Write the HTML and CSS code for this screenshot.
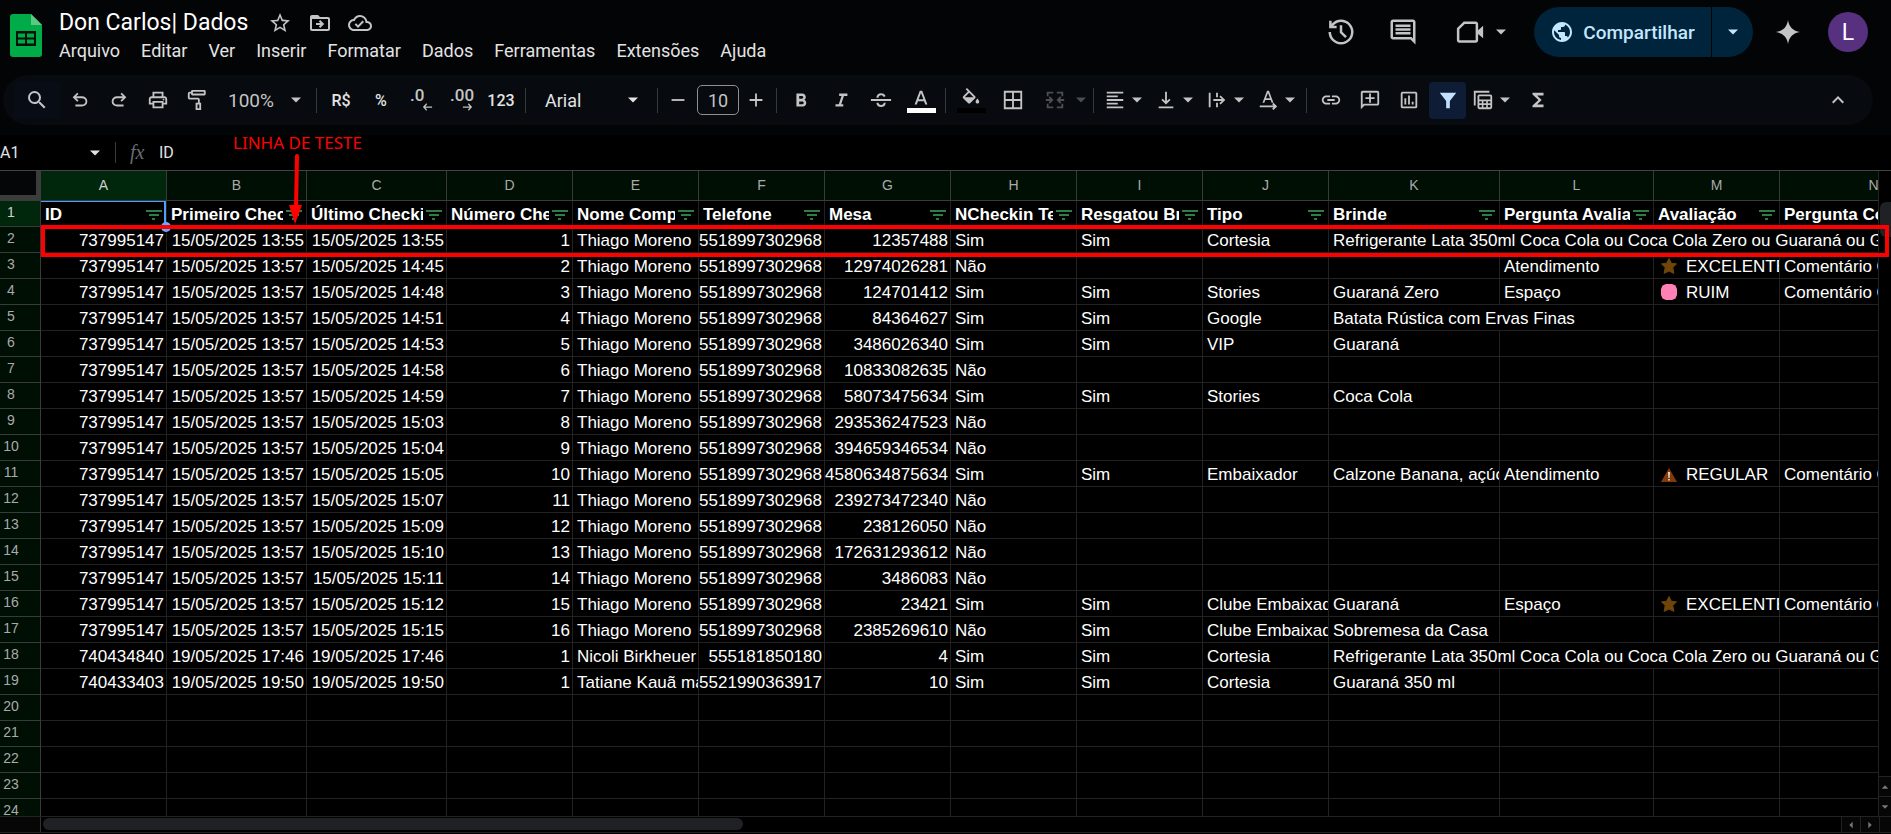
FILE: index.html
```html
<!DOCTYPE html>
<html lang="pt-BR">
<head>
<meta charset="utf-8">
<title>Don Carlos| Dados</title>
<link rel="stylesheet" href="styles.css">
</head>
<body>
<svg class="defs" aria-hidden="true">
  <symbol id="star" viewBox="0 0 24 24"><path d="M22 9.24l-7.19-.62L12 2 9.19 8.63 2 9.24l5.46 4.73L5.82 21 12 17.27 18.18 21l-1.63-7.03L22 9.24zM12 15.4l-3.76 2.27 1-4.28-3.32-2.88 4.38-.38L12 6.1l1.71 4.04 4.38.38-3.32 2.88 1 4.28L12 15.4z"/></symbol>
  <symbol id="move" viewBox="0 0 24 24"><path d="M20 6h-8l-2-2H4c-1.1 0-2 .9-2 2v12c0 1.1.9 2 2 2h16c1.1 0 2-.9 2-2V8c0-1.1-.9-2-2-2zm0 12H4V8h16v10zM12.2 17l4-4-4-4-1.4 1.4 1.6 1.6H8v2h4.4l-1.6 1.6z"/></symbol>
  <symbol id="cloud" viewBox="0 0 24 24"><path d="M19.35 10.04A7.49 7.49 0 0 0 12 4C9.11 4 6.6 5.64 5.35 8.04A5.994 5.994 0 0 0 0 14c0 3.31 2.69 6 6 6h13c2.76 0 5-2.24 5-5 0-2.64-2.05-4.78-4.65-4.96zM19 18H6c-2.21 0-4-1.79-4-4s1.79-4 4-4h.71C7.37 7.69 9.48 6 12 6c3.04 0 5.5 2.46 5.5 5.5v.5H19c1.66 0 3 1.34 3 3s-1.34 3-3 3zm-9-3.8l-2-2-1.4 1.4 3.4 3.4 6-6-1.4-1.4z"/></symbol>
  <symbol id="history" viewBox="0 0 24 24"><path d="M12 2a10 10 0 0 0-7.500 3.400V3H2.500v6h6V7H5.800A8 8 0 1 1 4 12H2A10 10 0 1 0 12 2zm-1 4.500v6l4.300 4.300 1.400-1.400-3.700-3.700V6.500z"/></symbol>
  <symbol id="chat" viewBox="0 0 24 24"><path d="M22 4c0-1.1-.9-2-2-2H4c-1.1 0-2 .9-2 2v12c0 1.1.9 2 2 2h14l4 4V4zm-2 13.2L18.8 16H4V4h16v13.2zM6 12h12v2H6zm0-3h12v2H6zm0-3h12v2H6z"/></symbol>
  <symbol id="video" viewBox="0 0 24 24"><path d="M7 3.500h9.500c1.100 0 2 .9 2 2v5l4-3.500v10l-4-3.500v5c0 1.100-.9 2-2 2H3.500c-1.100 0-2-.9-2-2V9zm.8 2L3.500 9.800v8.700h13v-13z"/></symbol>
  <symbol id="globe" viewBox="0 0 24 24"><path d="M12 2C6.480 2 2 6.480 2 12s4.480 10 10 10 10-4.480 10-10S17.520 2 12 2zm-1 17.930c-3.950-.490-7-3.850-7-7.930 0-.620.080-1.210.210-1.790L9 15v1c0 1.100.900 2 2 2v1.930zm6.900-2.540c-.260-.810-1-1.390-1.900-1.390h-1v-3c0-.550-.450-1-1-1H8v-2h2c.550 0 1-.450 1-1V7h2c1.100 0 2-.900 2-2v-.410c2.930 1.190 5 4.060 5 7.410 0 2.080-.800 3.970-2.100 5.390z"/></symbol>
  <symbol id="spark" viewBox="0 0 24 24"><path d="M12 0c1 7 5 11 12 12-7 1-11 5-12 12-1-7-5-11-12-12 7-1 11-5 12-12z"/></symbol>
  <symbol id="down" viewBox="0 0 24 24"><path d="M2 7h20L12 17z"/></symbol>
  <symbol id="search" viewBox="0 0 24 24"><path d="M15.500 14h-.790l-.280-.270A6.471 6.471 0 0 0 16 9.500 6.500 6.500 0 1 0 9.500 16c1.610 0 3.090-.590 4.230-1.570l.270.280v.790l5 4.990L20.490 19l-4.990-5zm-6 0C7.010 14 5 11.990 5 9.500S7.010 5 9.500 5 14 7.010 14 9.500 11.990 14 9.500 14z"/></symbol>
  <symbol id="undo" viewBox="0 0 24 24"><path d="M7 19v-2h7.100q1.575 0 2.738-1T18 13.500 16.838 11 14.100 10H7.800l2.600 2.600L9 14 4 9l5-5 1.400 1.400L7.800 8h6.300q2.425 0 4.163 1.575T20 13.500t-1.737 3.925T14.100 19z"/></symbol>
  <symbol id="redo" viewBox="0 0 24 24"><path d="M9.900 19q-2.425 0-4.163-1.575T4 13.500t1.737-3.925T9.900 8h6.300l-2.600-2.600L15 4l5 5-5 5-1.400-1.400 2.600-2.600H9.900q-1.575 0-2.737 1T6 13.500 7.163 16 9.900 17H17v2z"/></symbol>
  <symbol id="print" viewBox="0 0 24 24"><path d="M19 8h-1V3H6v5H5c-1.660 0-3 1.340-3 3v6h4v4h12v-4h4v-6c0-1.660-1.340-3-3-3zM8 5h8v3H8V5zm8 14H8v-4h8v4zm2-4v-2H6v2H4v-4c0-.550.450-1 1-1h14c.550 0 1 .450 1 1v4h-2z"/><circle cx="18" cy="11.500" r="1"/></symbol>
  <symbol id="paint" viewBox="0 0 24 24"><path d="M7 1h13a1.500 1.500 0 0 1 1.500 1.500v3A1.500 1.500 0 0 1 20 7H7a1.500 1.500 0 0 1-1.500-1.500V5H4v4.500h9a2 2 0 0 1 2 2V15h1.500v8h-6v-8H13v-3.500H4a2 2 0 0 1-2-2V5a2 2 0 0 1 2-2h1.500v-.5A1.500 1.500 0 0 1 7 1zm.5 2v2h12V3zM12.500 17v4h2v-4z"/></symbol>
  <symbol id="arrl" viewBox="0 0 24 24"><path d="M9 3l2 2.200L6.800 10.500H23v3H6.800l4.200 5.300L9 21l-8-9z"/></symbol>
  <symbol id="arrr" viewBox="0 0 24 24"><path d="M15 3l-2 2.200 4.200 5.300H1v3h16.200L13 18.800l2 2.200 8-9z"/></symbol>
  <symbol id="minus" viewBox="0 0 24 24"><path d="M5 11h14v2H5z"/></symbol>
  <symbol id="plus" viewBox="0 0 24 24"><path d="M19 13h-6v6h-2v-6H5v-2h6V5h2v6h6z"/></symbol>
  <symbol id="bold" viewBox="0 0 24 24"><path d="M15.600 11.790c.970-.670 1.650-1.770 1.650-2.790 0-2.260-1.750-4-4-4H7v14h7.040c2.090 0 3.710-1.700 3.710-3.790 0-1.520-.860-2.820-2.150-3.420zM10 7.500h3c.830 0 1.500.670 1.500 1.500s-.670 1.500-1.500 1.500h-3v-3zm3.500 9H10v-3h3.500c.830 0 1.500.670 1.500 1.500s-.670 1.500-1.500 1.500z"/></symbol>
  <symbol id="italic" viewBox="0 0 24 24"><path d="M10 5v2.500h2.600l-3 9H6V19h8.500v-2.500H12.200l3-9H19V5z"/></symbol>
  <symbol id="strike" viewBox="0 0 24 24"><path d="M1 11h22v2H1zM7 9.500C7 6.500 9 4.500 12 4.500c2.600 0 4.400 1.300 5 3.500l-2.200.8c-.4-1.300-1.300-2-2.800-2-1.700 0-2.700 1-2.700 2.700zM7 15h2.300c.1 1.500 1.100 2.400 2.800 2.400s2.700-.9 2.800-2.400h2.300c-.1 2.900-2.100 4.700-5.100 4.700S7.100 17.900 7 15z"/></symbol>
  <symbol id="colorA" viewBox="0 0 24 24"><path d="M10.700 3L5 18h2.400l1.300-3.600h6.600l1.300 3.600H19L13.300 3zm-1.300 9.400L12 5.400l2.600 7z"/></symbol>
  <symbol id="fill" viewBox="0 0 24 24"><path d="M16.560 8.940L7.620 0 6.210 1.410l2.380 2.380-5.150 5.150a1.490 1.490 0 0 0 0 2.120l5.500 5.500c.290.290.680.440 1.060.440s.770-.150 1.060-.440l5.500-5.500c.590-.580.590-1.530 0-2.120zM5.210 10L10 5.210 14.790 10H5.210zM19 11.500s-2 2.170-2 3.500c0 1.100.900 2 2 2s2-.900 2-2c0-1.330-2-3.500-2-3.500z"/></symbol>
  <symbol id="borders" viewBox="0 0 24 24"><path d="M2 2v20h20V2H2zm9 18H4v-7h7v7zm0-9H4V4h7v7zm9 9h-7v-7h7v7zm0-9h-7V4h7v7z"/></symbol>
  <symbol id="merge" viewBox="0 0 24 24"><path d="M3 3h7v2H5v3H3zM14 3h7v5h-2V5h-5zM3 16h2v3h5v2H3zM19 16h2v5h-7v-2h5zM2 11h4.500L5 9.500 6.400 8l4 4-4 4L5 14.500 6.500 13H2zM22 11h-4.500L19 9.500 17.600 8l-4 4 4 4 1.400-1.500-1.500-1.500H22z"/></symbol>
  <symbol id="align" viewBox="0 0 24 24"><path d="M15 15H3v2h12v-2zm0-8H3v2h12V7zM3 13h18v-2H3v2zm0 8h18v-2H3v2zM3 3v2h18V3H3z"/></symbol>
  <symbol id="bottom" viewBox="0 0 24 24"><path d="M11 3h2v10.200l2.600-2.600L17 12l-5 5-5-5 1.400-1.400 2.600 2.600zM4 19v2h16v-2z"/></symbol>
  <symbol id="wrap" viewBox="0 0 24 24"><path d="M3 4h2v16H3zM11 4h2v5h-2zM11 15h2v5h-2zM8 11h9.200l-2.600-2.600L16 7l5 5-5 5-1.400-1.400 2.600-2.600H8z"/></symbol>
  <symbol id="rotate" viewBox="0 0 24 24"><path d="M11 2L6 15h2l1.100-3h5.800l1.100 3h2L13 2zm-1.200 8.200L12 4.300l2.200 5.900zM3 18h15l-1.500-1.500 1.500-1.500 4 4-4 4-1.500-1.500L18 20H3z"/></symbol>
  <symbol id="link" viewBox="0 0 24 24"><path d="M3.900 12c0-1.710 1.390-3.100 3.100-3.100h4V7H7c-2.760 0-5 2.240-5 5s2.240 5 5 5h4v-1.900H7c-1.710 0-3.100-1.390-3.100-3.100zM8 13h8v-2H8v2zm9-6h-4v1.900h4c1.710 0 3.100 1.390 3.100 3.100s-1.390 3.100-3.100 3.100h-4V17h4c2.760 0 5-2.240 5-5s-2.240-5-5-5z"/></symbol>
  <symbol id="comment" viewBox="0 0 24 24"><path d="M20 2H4c-1.100 0-2 .900-2 2v18l4-4h14c1.100 0 2-.900 2-2V4c0-1.100-.900-2-2-2zm0 14H5.200L4 17.200V4h16v12zM11 5h2v4h4v2h-4v4h-2v-4H7V9h4z"/></symbol>
  <symbol id="chart" viewBox="0 0 24 24"><path d="M5 3h14a2 2 0 0 1 2 2v14a2 2 0 0 1-2 2H5a2 2 0 0 1-2-2V5a2 2 0 0 1 2-2zm0 2v14h14V5zM7 10h2v7H7zM11 7h2v10h-2zM15 14h2v3h-2z"/></symbol>
  <symbol id="funnel" viewBox="0 0 24 24"><path d="M3 4h18l-7 9v8h-4v-8z"/></symbol>
  <symbol id="views" viewBox="0 0 24 24"><path d="M2 2h17v2H4v14H2zM8 6h12a2 2 0 0 1 2 2v12a2 2 0 0 1-2 2H8a2 2 0 0 1-2-2V8a2 2 0 0 1 2-2zm0 2v3.500h12V8zm0 5.300v2.200h2.700v-2.200zm4.500 0v2.200h3v-2.200zm4.800 0v2.200H20v-2.200zM8 17.500V20h2.700v-2.500zm4.500 0V20h3v-2.500zm4.800 0V20H20v-2.500z"/></symbol>
  <symbol id="sigma" viewBox="0 0 24 24"><path d="M18 4H6v2l6.500 6L6 18v2h12v-3h-7l5-5-5-5h7z"/></symbol>
  <symbol id="up" viewBox="0 0 24 24"><path d="M12 8l-6 6 1.410 1.410L12 10.830l4.590 4.580L18 14z"/></symbol>
  <symbol id="filter" viewBox="0 0 16 10"><path d="M0 0h16v2H0zM3 4h10v2H3zM6 8h3v2H6z"/></symbol>
  <symbol id="good" viewBox="0 0 16 16"><path fill="#6e450b" stroke="#6e450b" stroke-linejoin="round" d="M8 .5l2.400 4.700 5.100.7-3.700 3.600 1.100 5.900L8 13l-4.900 2.400 1.100-5.900L.5 5.900l5.100-.7z"/></symbol>
  <symbol id="bad" viewBox="0 0 16 16"><path fill="#ff80b5" d="M5 0h6l3.500 1.500L16 5v6l-1.500 3.500L11 16H5l-3.500-1.500L0 11V5l1.500-3.500z"/></symbol>
  <symbol id="warn" viewBox="0 0 16 16"><path fill="#843a08" d="M8 2l8 14H0z"/><path fill="#ddd" d="M7 6h2l-.4 6H7.400zM7.200 13h1.600v1.600H7.200z"/></symbol>
</svg>

<header class="top">
  <svg class="logo" viewBox="0 0 32 43" aria-label="Planilhas" role="img"><path fill="#00ac47" d="M3 0h18l11 11v29a3 3 0 0 1-3 3H3a3 3 0 0 1-3-3V3a3 3 0 0 1 3-3z"/><path fill="#5bc982" d="M21 0l11 11H21z"/><path fill="#031006" fill-rule="evenodd" d="M6 17h20v15H6zM8 19.500v4h7v-4zm9 0v4h7v-4zM8 25.500v4h7v-4zm9 0v4h7v-4z"/></svg>
  <div class="heading">
    <div class="title-row">
      <h1>Don Carlos| Dados</h1>
      <button class="plain" aria-label="Com estrela"><svg class="i24"><use href="#star"/></svg></button>
      <button class="plain" aria-label="Mover"><svg class="i24"><use href="#move"/></svg></button>
      <button class="plain" aria-label="Status do documento"><svg class="i24"><use href="#cloud"/></svg></button>
    </div>
    <nav class="menu">
      <button>Arquivo</button><button>Editar</button><button>Ver</button><button>Inserir</button><button>Formatar</button><button>Dados</button><button>Ferramentas</button><button>Extensões</button><button>Ajuda</button>
    </nav>
  </div>
  <div class="actions">
    <button class="plain" aria-label="Histórico"><svg class="i30"><use href="#history"/></svg></button>
    <button class="plain" aria-label="Comentários"><svg class="i30"><use href="#chat"/></svg></button>
    <button class="plain video" aria-label="Videochamada"><svg class="i30"><use href="#video"/></svg><svg class="caret"><use href="#down"/></svg></button>
    <div class="share">
      <button class="share-main"><svg class="i24"><use href="#globe"/></svg>Compartilhar</button>
      <button class="share-more" aria-label="Opções"><svg class="caret"><use href="#down"/></svg></button>
    </div>
    <button class="plain" aria-label="Gemini"><svg class="i24"><use href="#spark"/></svg></button>
    <button class="avatar" aria-label="Conta">L</button>
  </div>
</header>

<div class="toolbar" role="toolbar">
  <button class="find" aria-label="Pesquisar"><svg class="i24"><use href="#search"/></svg></button>
  <button class="near" aria-label="Desfazer"><svg><use href="#undo"/></svg></button>
  <button class="near" aria-label="Refazer"><svg><use href="#redo"/></svg></button>
  <button class="near" aria-label="Imprimir"><svg><use href="#print"/></svg></button>
  <button class="near" aria-label="Pintar formatação"><svg><use href="#paint"/></svg></button>
  <button class="zoom">100%<svg class="caret"><use href="#down"/></svg></button>
  <span class="sep"></span>
  <button class="txt">R$</button>
  <button class="txt">%</button>
  <button class="dec">.0<svg><use href="#arrl"/></svg></button>
  <button class="dec">.00<svg><use href="#arrr"/></svg></button>
  <button class="txt">123</button>
  <span class="sep"></span>
  <button class="font">Arial<svg class="caret"><use href="#down"/></svg></button>
  <span class="sep"></span>
  <button class="step" aria-label="Diminuir"><svg><use href="#minus"/></svg></button>
  <input class="size" aria-label="Tamanho da fonte" value="10">
  <button class="step" aria-label="Aumentar"><svg><use href="#plus"/></svg></button>
  <span class="sep"></span>
  <button aria-label="Negrito"><svg><use href="#bold"/></svg></button>
  <button aria-label="Itálico"><svg><use href="#italic"/></svg></button>
  <button aria-label="Tachado"><svg><use href="#strike"/></svg></button>
  <button class="color" aria-label="Cor do texto"><svg><use href="#colorA"/></svg></button>
  <span class="sep"></span>
  <button class="color fillc" aria-label="Cor de preenchimento"><svg><use href="#fill"/></svg></button>
  <button class="wide" aria-label="Bordas"><svg><use href="#borders"/></svg></button>
  <button class="drop off" aria-label="Mesclar"><svg><use href="#merge"/></svg><svg class="caret"><use href="#down"/></svg></button>
  <span class="sep"></span>
  <button class="drop" aria-label="Alinhamento horizontal"><svg><use href="#align"/></svg><svg class="caret"><use href="#down"/></svg></button>
  <button class="drop" aria-label="Alinhamento vertical"><svg><use href="#bottom"/></svg><svg class="caret"><use href="#down"/></svg></button>
  <button class="drop" aria-label="Ajuste de texto"><svg><use href="#wrap"/></svg><svg class="caret"><use href="#down"/></svg></button>
  <button class="drop" aria-label="Rotação do texto"><svg><use href="#rotate"/></svg><svg class="caret"><use href="#down"/></svg></button>
  <span class="sep"></span>
  <button class="near" aria-label="Inserir link"><svg><use href="#link"/></svg></button>
  <button class="near" aria-label="Inserir comentário"><svg><use href="#comment"/></svg></button>
  <button aria-label="Inserir gráfico"><svg><use href="#chart"/></svg></button>
  <button class="on" aria-label="Filtro" aria-pressed="true"><svg><use href="#funnel"/></svg></button>
  <button class="drop" aria-label="Visualizações"><svg><use href="#views"/></svg><svg class="caret"><use href="#down"/></svg></button>
  <button class="wide" aria-label="Funções"><svg><use href="#sigma"/></svg></button>
  <button class="collapse" aria-label="Ocultar menus"><svg class="i24"><use href="#up"/></svg></button>
</div>

<main class="work">
  <div class="formula">
    <input class="name" aria-label="Caixa de nome" value="A1">
    <svg class="caret"><use href="#down"/></svg>
    <span class="sep"></span>
    <i class="fx">fx</i>
    <input class="content" aria-label="Fórmula" value="ID">
  </div>
  <div class="sheet">
    <div class="grid">
      <table>
        <colgroup id="cols"></colgroup>
        <thead id="head"></thead>
        <tbody id="rows"></tbody>
      </table>
      <span class="handle"></span>
    </div>
    <div class="vbar">
      <span class="vthumb"></span>
      <button aria-label="Para cima"><svg class="flip"><use href="#down"/></svg></button>
      <button aria-label="Para baixo"><svg><use href="#down"/></svg></button>
    </div>
    <div class="outline"></div>
  </div>
  <div class="hbar">
    <span class="hcorner"></span>
    <div class="htrack"><span class="hthumb"></span></div>
    <button aria-label="Para a esquerda"><svg class="left"><use href="#down"/></svg></button>
    <button aria-label="Para a direita"><svg class="right"><use href="#down"/></svg></button>
    <span class="hend"></span>
  </div>
  <div class="note">LINHA DE TESTE</div>
  <svg class="pointer" viewBox="0 0 14 72"><path fill="none" stroke="#f00" stroke-width="4" stroke-linecap="round" d="M9 3L8 54"/><path fill="#f00" d="M1 52h13L7 71z"/></svg>
</main>
<script src="sheet.js"></script>
</body>
</html>
```

FILE: styles.css
```css
* { box-sizing: border-box; }
body {
  margin: 0;
  height: 100vh;
  display: flex;
  flex-direction: column;
  overflow: hidden;
  background: #030406;
  color: #e3e3e3;
  font-family: Roboto, "Liberation Sans", sans-serif;
}
button, input {
  font: inherit;
  color: inherit;
  background: none;
  border: 0;
  padding: 0;
  margin: 0;
}
button {
  display: flex;
  align-items: center;
  justify-content: center;
  flex: none;
}
svg { fill: currentColor; flex: none; }
.defs { display: none; }
.i24 { width: 24px; height: 24px; }
.i30 { width: 30px; height: 30px; }
.caret { width: 12px; height: 12px; }
.plain { color: #c4c4c4; }

/* Header */
.top {
  display: flex;
  height: 75px;
  flex: none;
  padding: 7px 23px 0 10px;
}
.logo { width: 32px; height: 43px; margin-top: 7px; }
.heading { margin-left: 17px; }
.title-row { display: flex; align-items: center; gap: 16px; height: 31px; }
h1 { margin: 0 4px 0 0; font-size: 23px; font-weight: 400; color: #fff; white-space: nowrap; }
.menu { display: flex; gap: 21px; height: 24px; font-size: 18px; }
.actions { display: flex; align-items: center; height: 50px; margin-left: auto; }
.actions > .plain { margin-right: 32px; }
.actions > .plain + .plain { margin-right: 37px; }
.actions > .plain.video { gap: 10px; margin-right: 27px; }
.share { display: flex; gap: 1px; height: 50px; margin-right: 23px; color: #c2e7ff; }
.share button { background: #00243b; }
.share-main { width: 177px; gap: 9px; border-radius: 25px 0 0 25px; font-size: 19px; font-weight: 500; }
.share-more { width: 41px; border-radius: 0 25px 25px 0; }
.actions > .share + .plain { margin-right: 28px; }
.avatar { width: 40px; height: 40px; border-radius: 50%; background: #57307f; color: #fff; font-size: 23px; }

/* Toolbar */
.toolbar {
  display: flex;
  align-items: center;
  flex: none;
  height: 50px;
  margin: 0 18px 10px 3px;
  padding: 0 15px 0 11px;
  border-radius: 25px;
  background: #070a0f;
  color: #c4c4c4;
}
.toolbar button { width: 40px; height: 37px; }
.toolbar svg { width: 22px; height: 22px; }
.toolbar .caret { width: 12px; height: 12px; }
.toolbar .find { width: 46px; background: #080c15; }
.toolbar .i24 { width: 24px; height: 24px; }
.toolbar .near { width: 39px; }
.toolbar .wide { width: 42px; }
.toolbar .step { width: 32px; }
.toolbar .zoom { width: 96px; font-size: 19px; justify-content: space-between; padding: 0 10px 0 12px; }
.toolbar .txt { font-size: 16px; font-weight: 500; color: #e3e3e3; }
.toolbar .dec { flex-direction: column; align-items: flex-start; font-size: 17px; font-weight: 500; line-height: 14px; padding-left: 9px; }
.toolbar .dec svg { width: 11px; height: 10px; align-self: flex-end; margin-right: 8px; }
.toolbar .font { width: 123px; font-size: 18px; justify-content: space-between; padding: 0 14px 0 15px; color: #e3e3e3; }
.size { width: 42px; height: 30px; margin: 0 1px 0 3px; border: 1px solid #8e918f; border-radius: 5px; text-align: center; font-size: 18px; }
.sep { width: 1px; height: 25px; margin: 0 4px; background: #37393b; flex: none; }
.toolbar .color { flex-direction: column; }
.toolbar .color::after { content: ""; width: 29px; height: 5px; margin-top: -2px; background: #fff; }
.toolbar .fillc { width: 42px; }
.toolbar .fillc::after { background: #000; }
.toolbar .drop { width: 51px; padding-left: 6px; gap: 5px; justify-content: flex-start; }
.toolbar .off { width: 55px; padding-left: 10px; gap: 9px; color: #4c4e50; }
.toolbar .on { width: 37px; border-radius: 4px; background: #0e1c36; color: #c2e0ff; }
.toolbar .collapse { margin-left: auto; }

/* Formula bar */
.work { position: relative; flex: 1; min-height: 0; display: flex; flex-direction: column; background: #000; }
.formula { display: flex; align-items: center; height: 35px; flex: none; font-size: 16px; }
.name { width: 89px; }
.formula .sep { height: 21px; margin: 0 14px; }
.fx { width: 29px; font: italic 20px "Liberation Serif", serif; color: #6a6c6e; }
.content { flex: 1; }

/* Grid */
.sheet { position: relative; display: flex; flex: 1; min-height: 0; border-top: 1px solid #444; border-bottom: 1px solid #222; }
.grid { position: relative; flex: 1; min-width: 0; overflow: hidden; border-right: 1px solid #222; }
table {
  table-layout: fixed;
  width: 1px;
  border-collapse: separate;
  border-spacing: 0;
  font: 17px "Liberation Sans", Arial, sans-serif;
  color: #fff;
}
.c-row { width: 41px; }
.c-126 { width: 126px; }
.c-140 { width: 140px; }
.c-154 { width: 154px; }
.c-171 { width: 171px; }
.c-188 { width: 188px; }
td, th {
  height: 26px;
  padding: 2px 0 0 4px;
  border: solid #222;
  border-width: 0 1px 1px 0;
  overflow: hidden;
  white-space: nowrap;
  text-align: left;
  line-height: 23px;
}
td.num { text-align: right; padding: 2px 2px 0 0; }
td svg { width: 16px; height: 16px; margin: 0 9px 0 3px; vertical-align: -2px; }
thead th { height: 30px; }
th.letter, th.index { background: #000f04; border-color: #3a3a3a; color: #aaa; font-size: 14px; font-weight: 400; text-align: center; padding: 0; }
th.index { padding: 0 18px 3px 0; line-height: 22px; }
th.active { background: #00260b; color: #d0d0d0; }
th.corner { background: #050608; border: solid #3c3c3c; border-width: 0 5px 6px 0; }
th.label { font-weight: 700; padding-right: 4px; }
th.selected { box-shadow: inset -2px 0 #4c9ffe, inset 0 1px #4c9ffe; }
.cell { display: flex; align-items: center; }
.cell span { flex: 1; overflow: hidden; }
.cell button { color: #2e7d46; margin-left: 3px; }
.cell svg { width: 16px; height: 10px; }
.handle { position: absolute; left: 161px; top: 51px; width: 10px; height: 10px; border-radius: 50%; background: #69acff; }
.outline { position: absolute; left: 41px; right: 2px; top: 54px; height: 32px; border: 4px solid #f00; }

/* Scroll bars */
.vbar { display: flex; flex-direction: column; width: 12px; flex: none; color: #777; overflow: hidden; }
.vbar svg, .hbar svg { width: 8px; height: 8px; }
.vthumb { margin: 31px 0 auto 1px; height: 35px; border-radius: 6px 0 0 6px; background: #202124; }
.vbar button { height: 20px; border-top: 1px solid #222; background: #060606; }
.hbar { display: flex; height: 16px; margin-bottom: 1px; flex: none; border-bottom: 1px solid #222; color: #777; }
.hcorner { width: 41px; border-right: 1px solid #333; background: #060606; }
.htrack { flex: 1; padding: 1px 2px; }
.hthumb { display: block; width: 39%; height: 12px; border-radius: 6px; background: #202124; }
.hbar button { width: 19px; border-left: 1px solid #222; background: #060606; }
.hend { width: 12px; border-left: 1px solid #222; background: #060606; }
.flip { transform: rotate(180deg); }
.left { transform: rotate(90deg); }
.right { transform: rotate(-90deg); }

/* Annotation */
.note { position: absolute; left: 233px; top: -4px; font: 17px/24px "Noto Sans", sans-serif; color: #f00; white-space: nowrap; }
.pointer { position: absolute; left: 288px; top: 18px; width: 14px; height: 72px; }
```

FILE: sheet.js
```js
const widths = ["row", 126, 140, 140, 126, 126, 126, 126, 126, 126, 126, 171, 154, 126, 188];
const labels = ["ID", "Primeiro Checkin", "Último Checkin", "Número Checkins", "Nome Completo", "Telefone", "Mesa",
  "NCheckin Teste", "Resgatou Brinde", "Tipo", "Brinde", "Pergunta Avaliação", "Avaliação", "Pergunta Comentário"];
const id = "737995147", d = "15/05/2025 ", first = d + "13:57", n = "Thiago Moreno", t = "5518997302968";
const long = "Refrigerante Lata 350ml Coca Cola ou Coca Cola Zero ou Guaraná ou Guaraná Zero";
const icon = { EXCELENTE: "good", RUIM: "bad", REGULAR: "warn" };
const c = "Comentário Cliente";
const data = [
  [id, d + "13:55", d + "13:55", 1, n, t, "12357488", "Sim", "Sim", "Cortesia", long],
  [id, first, d + "14:45", 2, n, t, "12974026281", "Não", "", "", "", "Atendimento", "EXCELENTE", c],
  [id, first, d + "14:48", 3, n, t, "124701412", "Sim", "Sim", "Stories", "Guaraná Zero", "Espaço", "RUIM", c],
  [id, first, d + "14:51", 4, n, t, "84364627", "Sim", "Sim", "Google", "Batata Rústica com Ervas Finas"],
  [id, first, d + "14:53", 5, n, t, "3486026340", "Sim", "Sim", "VIP", "Guaraná"],
  [id, first, d + "14:58", 6, n, t, "10833082635", "Não"],
  [id, first, d + "14:59", 7, n, t, "58073475634", "Sim", "Sim", "Stories", "Coca Cola"],
  [id, first, d + "15:03", 8, n, t, "293536247523", "Não"],
  [id, first, d + "15:04", 9, n, t, "394659346534", "Não"],
  [id, first, d + "15:05", 10, n, t, "4580634875634", "Sim", "Sim", "Embaixador", "Calzone Banana, açúcar", "Atendimento", "REGULAR", c],
  [id, first, d + "15:07", 11, n, t, "239273472340", "Não"],
  [id, first, d + "15:09", 12, n, t, "238126050", "Não"],
  [id, first, d + "15:10", 13, n, t, "172631293612", "Não"],
  [id, first, d + "15:11", 14, n, t, "3486083", "Não"],
  [id, first, d + "15:12", 15, n, t, "23421", "Sim", "Sim", "Clube Embaixador", "Guaraná", "Espaço", "EXCELENTE", c],
  [id, first, d + "15:15", 16, n, t, "2385269610", "Não", "Sim", "Clube Embaixador", "Sobremesa da Casa"],
  ["740434840", "19/05/2025 17:46", "19/05/2025 17:46", 1, "Nicoli Birkheuer", "555181850180", "4", "Sim", "Sim", "Cortesia", long],
  ["740433403", "19/05/2025 19:50", "19/05/2025 19:50", 1, "Tatiane Kauã machado", "5521990363917", "10", "Sim", "Sim", "Cortesia", "Guaraná 350 ml"],
  [], [], [], [], []
];
const numeric = [0, 1, 2, 3, 5, 6];

document.getElementById("cols").innerHTML = widths.map(w => `<col class="c-${w}">`).join("");

document.getElementById("head").innerHTML = `<tr><th class="corner"></th>` +
  labels.map((_, i) => `<th class="letter${i ? "" : " active"}">${String.fromCharCode(65 + i)}</th>`).join("") + "</tr>";

const labelRow = `<tr><th class="index active">1</th>` + labels.map((l, i) =>
  `<th class="label${i ? "" : " selected"}"><div class="cell"><span>${l}</span><button aria-label="Filtrar ${l}"><svg><use href="#filter"/></svg></button></div></th>`
).join("") + "</tr>";

// Long text runs over the empty cells to its right.
function row(values, index) {
  let html = `<tr><th class="index">${index + 2}</th>`;
  for (let i = 0; i < labels.length; i++) {
    const v = values[i] ?? "";
    const span = v === long ? 4 : String(v).startsWith("Batata") ? 2 : 1;
    const mark = icon[v] ? `<svg><use href="#${icon[v]}"/></svg>` : "";
    html += `<td${numeric.includes(i) ? ' class="num"' : ""}${span > 1 ? ` colspan="${span}"` : ""}>${mark}${v}</td>`;
    i += span - 1;
  }
  return html + "</tr>";
}
document.getElementById("rows").innerHTML = labelRow + data.map(row).join("");
```
